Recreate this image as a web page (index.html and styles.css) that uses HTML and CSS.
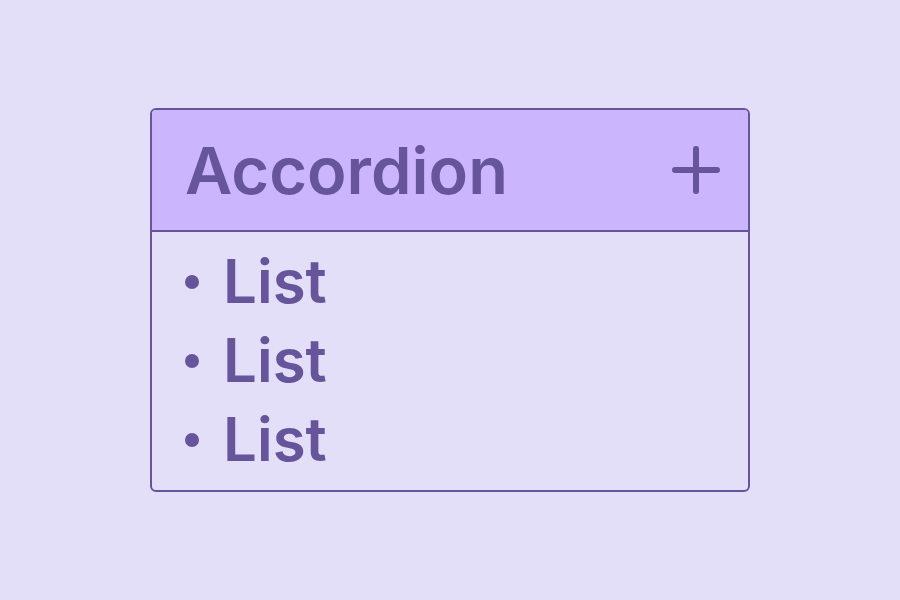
FILE: index.html
```html
<!DOCTYPE html>
<html>
<head>
<meta charset="utf-8">
<link rel="stylesheet" href="styles.css">
</head>
<body>
<div class="stage">
  <div class="accordion">
    <div class="header">
      <span class="title">Accordion</span>
      <svg class="plus" width="48" height="48" viewBox="0 0 48 48"><path d="M24 3V45M3 24H45" stroke="#66559a" stroke-width="6" stroke-linecap="round" fill="none"/></svg>
    </div>
    <ul class="list">
      <li><span class="dot"></span>List</li>
      <li><span class="dot"></span>List</li>
      <li><span class="dot"></span>List</li>
    </ul>
  </div>
</div>
</body>
</html>
```
FILE: styles.css
```css
html, body { margin: 0; padding: 0; }
body { background: #e3dff8; font-family: Inter, "Noto Sans", sans-serif; color: #66559a; }
.stage { width: 900px; height: 600px; display: flex; align-items: center; justify-content: center; }
.accordion { width: 596px; height: 380px; border: 2px solid #66559a; border-radius: 6px; overflow: hidden; display: flex; flex-direction: column; }
.header { box-sizing: border-box; height: 122px; background: #cbb5fd; border-bottom: 2px solid #66559a; display: flex; align-items: center; justify-content: space-between; padding: 0 28px 0 33px; }
.title { font-size: 65px; font-weight: 600; }
.plus { display: block; }
.list { list-style: none; margin: 0; padding: 10px 0 0 33px; }
.list li { display: flex; align-items: center; font-size: 60px; font-weight: 600; height: 79px; line-height: 79px; }
.dot { width: 14px; height: 14px; border-radius: 50%; background: #66559a; margin-right: 24px; }
```
